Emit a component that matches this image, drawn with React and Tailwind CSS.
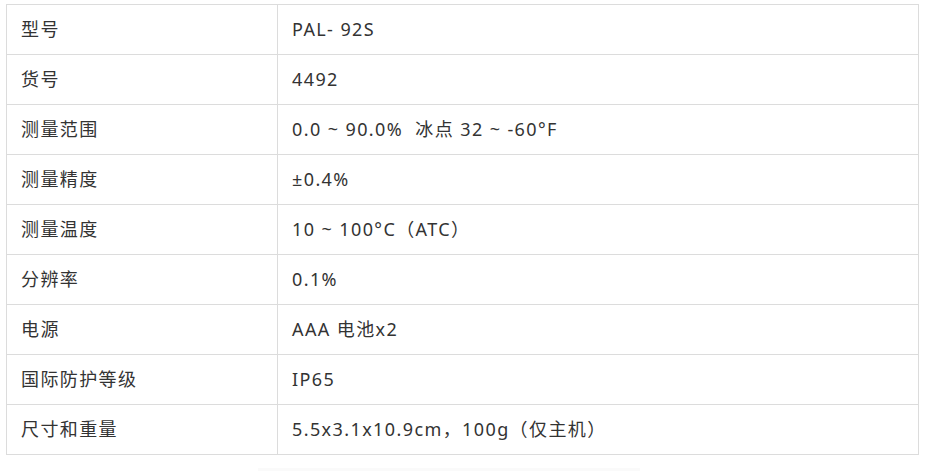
import React from 'react'

const rows = [
  ['型号', 'PAL- 92S'],
  ['货号', '4492'],
  ['测量范围', '0.0 ~ 90.0%  冰点 32 ~ -60°F'],
  ['测量精度', '±0.4%'],
  ['测量温度', '10 ~ 100°C（ATC）'],
  ['分辨率', '0.1%'],
  ['电源', 'AAA 电池x2'],
  ['国际防护等级', 'IP65'],
  ['尺寸和重量', '5.5x3.1x10.9cm，100g（仅主机）'],
]

export default function App() {
  return (
    <div
      className="w-[928px] h-[471px] bg-white pt-[4px] pl-[6px] text-[#333]"
      style={{ fontFamily: '"Noto Sans", "Noto Sans CJK SC", sans-serif' }}
    >
      <table className="w-[913px] border-collapse text-[18px] tracking-[1.4px] whitespace-pre">
        <tbody>
          {rows.map(([k, v]) => (
            <tr key={k} className="h-[50px]">
              <td className="w-[271px] border border-[#dcdcdc] pl-[14px] align-middle">{k}</td>
              <td className="border border-[#dcdcdc] pl-[14px] align-middle">{v}</td>
            </tr>
          ))}
        </tbody>
      </table>
      <div className="ml-[252px] mt-[13px] h-[4px] w-[382px] bg-[#fafafa]" />
    </div>
  )
}
